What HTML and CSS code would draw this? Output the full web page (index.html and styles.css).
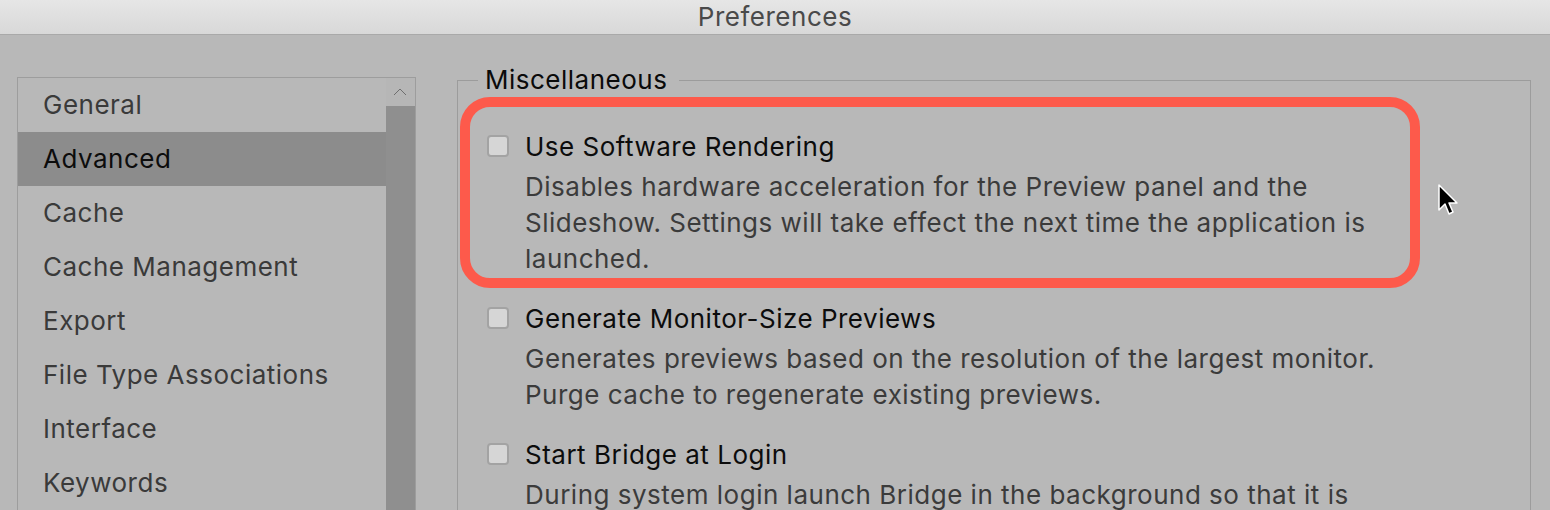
FILE: index.html
```html
<!DOCTYPE html>
<html>
<head>
<meta charset="utf-8">
<link rel="stylesheet" href="styles.css">
</head>
<body>
<div class="window">
  <div class="titlebar">Preferences</div>
  <div class="content">
    <div class="sidebar">
      <ul class="list">
        <li>General</li>
        <li class="selected">Advanced</li>
        <li>Cache</li>
        <li>Cache Management</li>
        <li>Export</li>
        <li>File Type Associations</li>
        <li>Interface</li>
        <li>Keywords</li>
      </ul>
      <div class="scrollbar">
        <div class="arrow">
          <svg width="28" height="28" viewBox="0 0 28 28"><path d="M8 17 L14 11 L20 17" fill="none" stroke="#6e6e6e" stroke-width="1"/></svg>
        </div>
        <div class="track"></div>
      </div>
    </div>
    <fieldset class="panel">
      <legend>Miscellaneous</legend>
      <div class="highlight"></div>
      <div class="option">
        <span class="check"></span>
        <div class="text">
          <div class="label">Use Software Rendering</div>
          <div class="desc">Disables hardware acceleration for the Preview panel and the<br>Slideshow. Settings will take effect the next time the application is<br>launched.</div>
        </div>
      </div>
      <div class="option">
        <span class="check"></span>
        <div class="text">
          <div class="label">Generate Monitor-Size Previews</div>
          <div class="desc">Generates previews based on the resolution of the largest monitor.<br>Purge cache to regenerate existing previews.</div>
        </div>
      </div>
      <div class="option">
        <span class="check"></span>
        <div class="text">
          <div class="label">Start Bridge at Login</div>
          <div class="desc">During system login launch Bridge in the background so that it is</div>
        </div>
      </div>
    </fieldset>
  </div>
  <svg class="cursor" width="26" height="40" viewBox="0 0 26 40"><path d="M2 2 L2 27 L8 21 L12 31 L16 29 L12 20 L20 20 Z" fill="#000" stroke="#fff" stroke-width="1.5" stroke-linejoin="round"/></svg>
</div>
</body>
</html>
```

FILE: styles.css
```css
html, body {
  margin: 0;
  padding: 0;
  background: #b8b8b8;
  overflow: hidden;
}
body {
  font-family: Inter, "Open Sans", "Liberation Sans", sans-serif;
  letter-spacing: 0.5px;
}
.window {
  position: relative;
  width: 1550px;
  height: 510px;
  overflow: hidden;
}
.titlebar {
  height: 34px;
  line-height: 34px;
  text-align: center;
  font-size: 26px;
  color: #4a4a4a;
  background: linear-gradient(#e6e6e6, #d8d8d8);
  border-bottom: 1px solid #a9a9a9;
}
.content {
  display: flex;
  align-items: flex-start;
  padding: 42px 0 0 17px;
  gap: 41px;
}
.sidebar {
  display: flex;
  width: 397px;
  height: 460px;
  border: 1px solid #9d9d9d;
  border-bottom: none;
}
.list {
  list-style: none;
  margin: 0;
  padding: 0;
  flex: 1;
}
.list li {
  height: 54px;
  line-height: 54px;
  padding-left: 25px;
  font-size: 26px;
  color: #3a3a3a;
}
.list li.selected {
  background: #8c8c8c;
  color: #0c0c0c;
}
.scrollbar {
  width: 29px;
  display: flex;
  flex-direction: column;
}
.arrow {
  height: 28px;
  background: #b6b6b6;
}
.arrow svg {
  display: block;
}
.track {
  flex: 1;
  background: #8f8f8f;
}
.panel {
  position: relative;
  margin: 0;
  width: 1074px;
  height: 480px;
  box-sizing: border-box;
  border: 1px solid #9c9c9c;
  border-bottom: none;
  padding: 34px 0 0 29px;
  margin-top: -12px;
}
.panel legend {
  font-size: 26px;
  color: #0a0a0a;
  padding: 0 12px 0 7px;
  margin-left: -9px;
  line-height: 30px;
}
.highlight {
  position: absolute;
  left: 2px;
  top: 2px;
  width: 940px;
  height: 171px;
  border: 10px solid #fd5a4b;
  border-radius: 30px;
}
.option {
  display: flex;
  gap: 16px;
  margin-bottom: 24px;
}
.check {
  flex: none;
  width: 18px;
  height: 18px;
  margin-top: 6px;
  background: #d6d6d6;
  border: 2px solid #a3a3a3;
  border-radius: 4px;
}
.label {
  font-size: 26px;
  line-height: 36px;
  color: #0c0c0c;
  margin-bottom: 4px;
}
.desc {
  font-size: 26px;
  line-height: 36px;
  color: #3b3b3b;
  white-space: nowrap;
}
.cursor {
  position: absolute;
  left: 1437px;
  top: 183px;
}
```
